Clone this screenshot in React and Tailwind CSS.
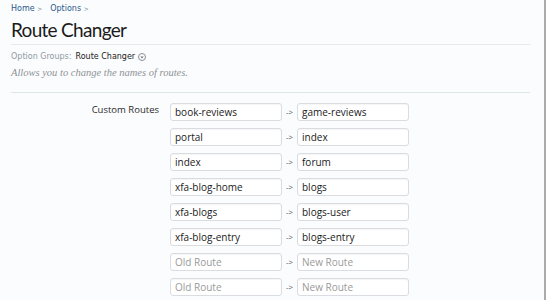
import React from 'react';

const routes = [
  { from: 'book-reviews', to: 'game-reviews' },
  { from: 'portal', to: 'index' },
  { from: 'index', to: 'forum' },
  { from: 'xfa-blog-home', to: 'blogs' },
  { from: 'xfa-blogs', to: 'blogs-user' },
  { from: 'xfa-blog-entry', to: 'blogs-entry' },
  { from: '', to: '' },
  { from: '', to: '' },
];

const RouteInput = ({ value, placeholder }) => (
  <input
    type="text"
    defaultValue={value}
    placeholder={placeholder}
    className="w-[112px] h-[18px] rounded-[3px] border border-[#d9dde1] bg-white px-[4px] text-[10px] text-[#1a1a1a] placeholder:text-[#9a9a9a] shadow-[inset_0_1px_1px_rgba(0,0,0,0.04)] outline-none"
  />
);

export default function App() {
  return (
    <div className="relative h-[300px] w-[546px] overflow-hidden bg-[#fbfcfd] font-['DejaVu_Sans',sans-serif]">
      <div className="pl-[11px] pr-[16px] pt-[4px]">
        {/* Breadcrumb */}
        <div className="flex items-center gap-[8px] text-[8px] leading-[10px] text-[#2a5a8c]">
          <span>Home <span className="text-[6px] text-[#6a7d90]">&gt;</span></span>
          <span>Options <span className="text-[6px] text-[#6a7d90]">&gt;</span></span>
        </div>

        <h1 className="mt-[4px] font-['Lato',sans-serif] text-[19px] leading-[24px] tracking-[-0.7px] text-[#1b1b1b]">
          Route Changer
        </h1>

        <div className="mt-[2px] h-px bg-[#e5eaee]" />

        <div className="mt-[7px] flex items-center text-[8px] leading-[10px]">
          <span className="text-[#8f9aa3]">Option Groups:</span>
          <span className="ml-[4px] text-[#222]">Route Changer</span>
          <span className="ml-[3px] flex h-[8px] w-[8px] items-center justify-center rounded-full border border-[#8a8f95]">
            <svg viewBox="0 0 6 4" className="h-[3px] w-[4px]">
              <path d="M0.5 0.5 L3 3.5 L5.5 0.5 Z" fill="#6d7278" />
            </svg>
          </span>
        </div>

        <p className="mt-[4px] font-['Liberation_Serif',serif] text-[10.5px] italic leading-[13px] text-[#8e9398]">
          Allows you to change the names of routes.
        </p>

        <div className="mt-[13px] h-px bg-[#dbe7eb]" />

        {/* Custom routes */}
        <div className="mt-[10px] flex">
          <div className="w-[148px] pt-[1px] text-right font-['Open_Sans',sans-serif] text-[9.5px] leading-[12px] text-[#2a2a2a]">
            Custom Routes
          </div>
          <div className="ml-[11px] flex flex-col gap-[7px] font-['Open_Sans',sans-serif]">
            {routes.map((r, i) => (
              <div key={i} className="flex items-center">
                <RouteInput value={r.from} placeholder="Old Route" />
                <span className="w-[15px] text-center text-[8px] text-[#555]">-&gt;</span>
                <RouteInput value={r.to} placeholder="New Route" />
              </div>
            ))}
          </div>
        </div>
      </div>

      {/* right edge frame */}
      <div className="absolute right-0 top-0 h-full w-[2px] bg-[#a9abae]" />
    </div>
  );
}
